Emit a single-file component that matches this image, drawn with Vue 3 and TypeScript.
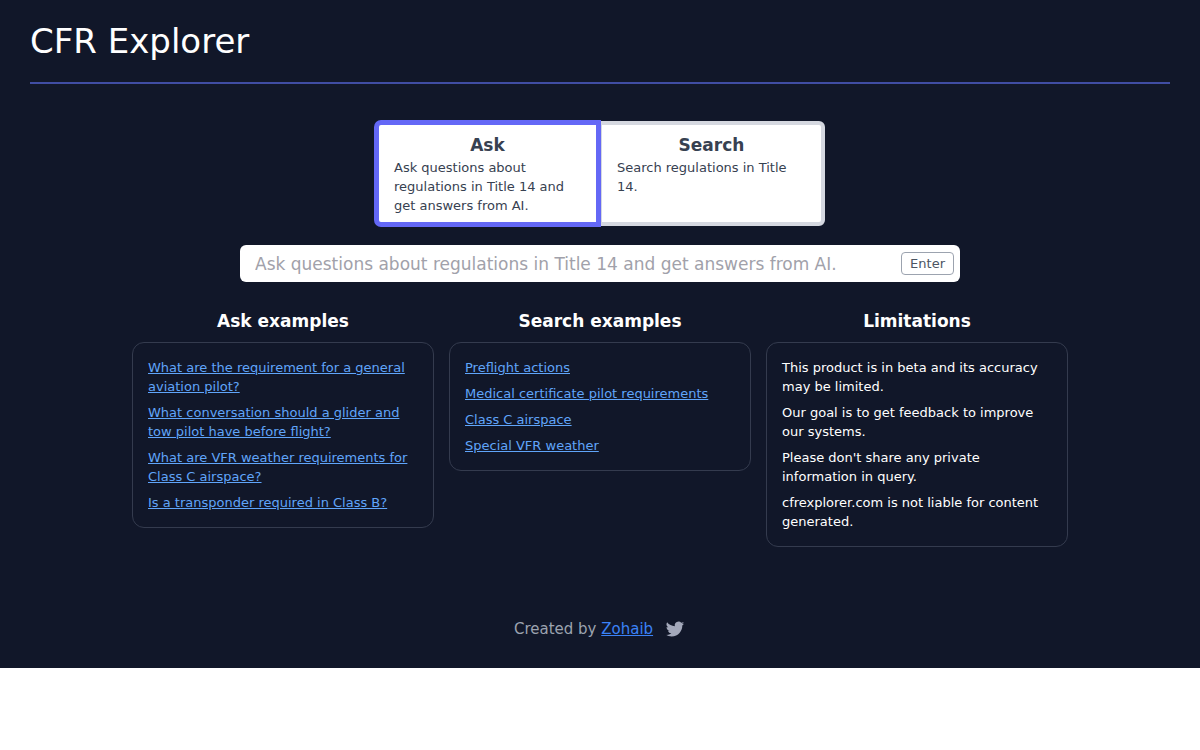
<script setup lang="ts">
import { computed, ref } from 'vue'

type Mode = 'ask' | 'search'

interface ModeOption {
  id: Mode
  title: string
  description: string
}

const modes: ModeOption[] = [
  {
    id: 'ask',
    title: 'Ask',
    description: 'Ask questions about regulations in Title 14 and get answers from AI.',
  },
  { id: 'search', title: 'Search', description: 'Search regulations in Title 14.' },
]

const askExamples: string[] = [
  'What are the requirement for a general aviation pilot?',
  'What conversation should a glider and tow pilot have before flight?',
  'What are VFR weather requirements for Class C airspace?',
  'Is a transponder required in Class B?',
]

const searchExamples: string[] = [
  'Preflight actions',
  'Medical certificate pilot requirements',
  'Class C airspace',
  'Special VFR weather',
]

const limitations: string[] = [
  'This product is in beta and its accuracy may be limited.',
  'Our goal is to get feedback to improve our systems.',
  "Please don't share any private information in query.",
  'cfrexplorer.com is not liable for content generated.',
]

const mode = ref<Mode>('ask')
const query = ref('')
const placeholder = computed(() => modes.find((m) => m.id === mode.value)?.description ?? '')

function useExample(target: Mode, text: string): void {
  mode.value = target
  query.value = text
}
</script>

<template>
  <div class="page">
    <header class="header">
      <h1>CFR Explorer</h1>
    </header>

    <main>
      <div class="modes" role="radiogroup" aria-label="Mode">
        <label v-for="m in modes" :key="m.id" class="mode" :class="{ selected: mode === m.id }">
          <input v-model="mode" class="hidden" type="radio" name="mode" :value="m.id" />
          <span class="mode-title">{{ m.title }}</span>
          <span class="mode-text">{{ m.description }}</span>
        </label>
      </div>

      <form class="query" @submit.prevent>
        <input v-model="query" type="text" :placeholder="placeholder" :aria-label="placeholder" />
        <button type="submit">Enter</button>
      </form>

      <div class="columns">
        <section>
          <h2>Ask examples</h2>
          <ul>
            <li v-for="text in askExamples" :key="text">
              <a href="#" @click.prevent="useExample('ask', text)">{{ text }}</a>
            </li>
          </ul>
        </section>
        <section>
          <h2>Search examples</h2>
          <ul>
            <li v-for="text in searchExamples" :key="text">
              <a href="#" @click.prevent="useExample('search', text)">{{ text }}</a>
            </li>
          </ul>
        </section>
        <section>
          <h2>Limitations</h2>
          <ul>
            <li v-for="text in limitations" :key="text">{{ text }}</li>
          </ul>
        </section>
      </div>
    </main>

    <footer class="footer">
      <span>Created by <a href="#">Zohaib</a></span>
      <a class="twitter" href="#" aria-label="Twitter">
        <svg viewBox="0 0 24 24" fill="currentColor" aria-hidden="true">
          <path
            d="M8.29 20.251c7.547 0 11.675-6.253 11.675-11.675 0-.178 0-.355-.012-.53A8.348 8.348 0 0022 5.92a8.19 8.19 0 01-2.357.646 4.118 4.118 0 001.804-2.27 8.224 8.224 0 01-2.605.996 4.107 4.107 0 00-6.993 3.743 11.65 11.65 0 01-8.457-4.287 4.106 4.106 0 001.27 5.477A4.072 4.072 0 012.8 9.713v.052a4.105 4.105 0 003.292 4.022 4.095 4.095 0 01-1.853.07 4.108 4.108 0 003.834 2.85A8.233 8.233 0 012 18.407a11.616 11.616 0 006.29 1.84"
          />
        </svg>
      </a>
    </footer>
  </div>
</template>

<style>
body {
  margin: 0;
  background: #fff;
}
</style>

<style scoped>
* {
  box-sizing: border-box;
}

.page {
  padding: 22px 30px 28px;
  background: #111729;
  color: #fff;
  font-family: 'DejaVu Sans', sans-serif;
  font-size: 15px;
  line-height: 22px;
}

.header {
  padding-bottom: 22px;
  border-bottom: 2px solid #404da3;
}

h1 {
  margin: 0;
  font-size: 34px;
  font-weight: 400;
  line-height: 38px;
}

.hidden {
  position: absolute;
  width: 1px;
  height: 1px;
  margin: 0;
  opacity: 0;
}

.modes {
  display: grid;
  grid-template-columns: repeat(2, minmax(0, 1fr));
  max-width: 450px;
  margin: 37px auto 0;
}

.mode {
  position: relative;
  padding: 7px 15px;
  border: 4px solid #d5d8e0;
  background: #fff;
  color: #374151;
  cursor: pointer;
}

.mode:first-of-type {
  border-radius: 6px 0 0 6px;
}

.mode:last-of-type {
  margin-left: -2px;
  border-radius: 0 6px 6px 0;
}

.mode.selected {
  z-index: 1;
  border-color: #6468f6;
  box-shadow: 0 0 0 1px #6468f6;
}

.mode-title {
  display: block;
  font-size: 17px;
  font-weight: 700;
  line-height: 26px;
  text-align: center;
}

.mode-text {
  display: block;
  font-size: 13px;
  line-height: 19px;
}

.query {
  display: flex;
  align-items: center;
  max-width: 720px;
  height: 37px;
  margin: 19px auto 0;
  padding-right: 6px;
  border-radius: 6px;
  background: #fff;
}

.query input {
  flex: 1;
  min-width: 0;
  padding: 0 15px;
  border: 0;
  outline: 0;
  background: transparent;
  color: #111827;
  font: inherit;
  font-size: 17px;
}

.query input::placeholder {
  color: #a1a1aa;
  opacity: 1;
}

.query button {
  padding: 0 8px;
  border: 1px solid #9ca3af;
  border-radius: 4px;
  background: #fff;
  color: #4b5563;
  font: inherit;
  font-size: 13px;
  line-height: 21px;
}

.columns {
  display: grid;
  grid-template-columns: repeat(3, minmax(0, 1fr));
  align-items: start;
  gap: 15px;
  max-width: 936px;
  margin: 26px auto 0;
}

h2 {
  margin: 0 0 8px;
  font-size: 17px;
  font-weight: 700;
  line-height: 26px;
  text-align: center;
}

ul {
  display: grid;
  gap: 7px;
  margin: 0;
  padding: 15px;
  border: 1px solid #343b4e;
  border-radius: 12px;
  font-size: 13px;
  line-height: 19px;
  list-style: none;
}

li a {
  color: #60a5fa;
}

.footer {
  display: flex;
  align-items: center;
  justify-content: center;
  gap: 11px;
  margin-top: 71px;
  color: #9ca3af;
}

.footer a {
  color: #3b82f6;
}

.footer .twitter {
  display: flex;
  color: #a3a8ba;
}

.twitter svg {
  width: 22px;
  height: 22px;
}
</style>
